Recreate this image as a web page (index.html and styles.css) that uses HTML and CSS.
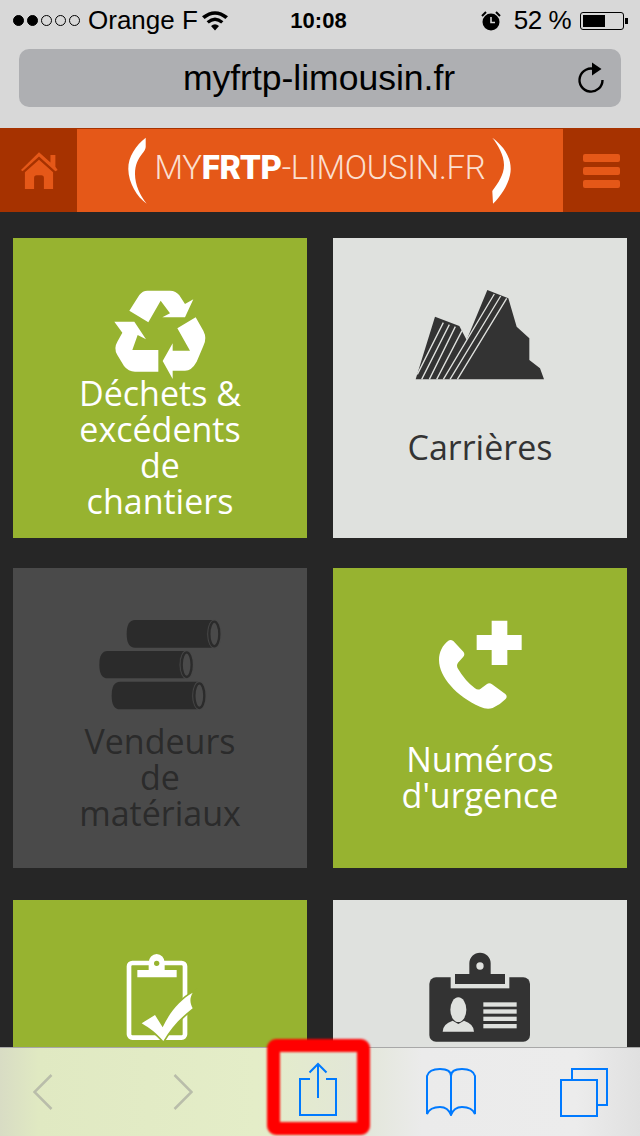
FILE: index.html
```html
<!DOCTYPE html>
<html lang="fr">
<head>
    <meta charset="UTF-8">
    <meta name="viewport" content="width=device-width, initial-scale=1.0">
    <title>myfrtp-limousin.fr</title>
    <link rel="stylesheet" href="styles.css">
</head>
<body>
    <div class="safari-top">
        <div class="status-bar">
            <div class="status-left">
                <span class="dot full"></span><span class="dot full"></span><span class="dot"></span><span class="dot"></span><span class="dot"></span>
                <span class="carrier">Orange F</span>
                <svg class="wifi" viewBox="0 0 28 20" width="28" height="20">
                    <path d="M14 19.5 L10 15 Q14 11.5 18 15 Z M7.8 12.6 L5.6 10.2 Q14 2.8 22.4 10.2 L20.2 12.6 Q14 7.2 7.8 12.6 Z M3.6 8 L1 5.3 Q14 -5 27 5.3 L24.4 8 Q14 -.6 3.6 8 Z" fill="#000"/>
                </svg>
            </div>
            <span class="clock">10:08</span>
            <div class="status-right">
                <svg class="alarm" viewBox="0 0 20 20" width="20" height="20">
                    <circle cx="10" cy="11" r="8.5" fill="#000"/>
                    <path d="M10 6 V11.5 H14" fill="none" stroke="#d8d8d8" stroke-width="1.6"/>
                    <path d="M1 5 L5 1 M19 5 L15 1" stroke="#000" stroke-width="2"/>
                </svg>
                <span class="battery-text">52 %</span>
                <div class="battery"><div class="battery-level"></div></div>
            </div>
        </div>
        <div class="url-bar">
            <span class="url">myfrtp-limousin.fr</span>
            <svg class="reload" viewBox="0 0 28 32" width="28" height="32">
                <path d="M18.5 7.5 A11.5 11.5 0 1 0 25.5 18" fill="none" stroke="#000" stroke-width="2.4"/>
                <path d="M15 .5 L24.5 7 L15 13.5 Z" fill="#000"/>
            </svg>
        </div>
    </div>

    <header class="site-header">
        <a class="side-btn">
            <svg viewBox="57 70 116 114" width="38" height="38">
                <path d="M60 124 L115 70 L150 101 V78 H165 V114 L172 124 L165 128 L115 83 L65 128 Z" fill="#e55818"/>
                <path d="M115 93 L158 131 V182 H130 V148 Q130 140 122 140 H108 Q100 140 100 148 V182 H72 V131 Z" fill="#e55818"/>
            </svg>
        </a>
        <div class="logo">
            <svg class="bracket" viewBox="0 0 20 68" width="20" height="68">
                <path d="M17.7 .7 C8 8 0 20 .3 32 C.5 46 9 60 18.7 66.7 C12 58 7 48 7 37 C7 28 10 22 14 17 Q17.5 13 17.7 10 Z" fill="#fff"/>
            </svg>
            <span class="logo-text">MY<b>FRTP</b>-LIMOUSIN.FR</span>
            <svg class="bracket" viewBox="0 0 20 68" width="20" height="68">
                <path d="M.3 .7 C10 8 18.7 18 18.7 32 C18.7 44 10 58 1 66.7 L.3 54 C6 46 12 38 12 28 C12 18 6 8 .3 .7 Z" fill="#fff"/>
            </svg>
        </div>
        <a class="side-btn">
            <div class="burger"><span></span><span></span><span></span></div>
        </a>
    </header>

    <main class="tiles">
        <a class="tile green">
            <svg class="tile-icon" viewBox="0 0 420 330" width="140" height="110">
                <g fill="#fff">
                    <path d="M118 92 L148 45 Q158 32 172 32 L240 32 Q258 32 268 46 L285 72 L310 58 L285 112 L217 112 L240 100 L212 62 L175 127 Z"/>
                    <path d="M73 125 L133 125 L168 178 L143 165 L127 210 L205 210 L205 275 L135 275 Q115 275 102 258 L82 225 Q70 205 82 185 L97 158 Z"/>
                    <path d="M248 297 L218 243 L248 190 L248 212 L300 212 L262 145 L317 112 L340 152 Q352 175 340 198 L320 245 Q305 272 285 272 L248 272 Z"/>
                </g>
            </svg>
            <span class="tile-label">Déchets &amp; excédents de chantiers</span>
        </a>
        <a class="tile light">
            <svg class="tile-icon" viewBox="0 0 480 330" width="160" height="110">
                <path d="M47 298 L105 110 L178 138 L200 180 L262 30 L325 55 L350 140 L388 175 L388 240 L420 265 L432 298 Z" fill="#333"/>
                <g stroke="#dfe1de" stroke-width="4">
                    <path d="M52 283 L130 128 M65 298 L148 134 M88 298 L166 140 M110 298 L186 152 M130 298 L283 42 M150 298 L302 48 M172 298 L320 55"/>
                </g>
            </svg>
            <span class="tile-label">Carrières</span>
        </a>
        <a class="tile dark">
            <svg class="tile-icon" viewBox="0 0 420 330" width="140" height="110">
                <g fill="#2b2b2b">
                    <path d="M135 30 H370 V113 H135 Q110 113 110 72 Q110 30 135 30 Z"/>
                    <path d="M53 123 H285 V205 H53 Q28 205 28 164 Q28 123 53 123 Z"/>
                    <path d="M90 215 H325 V298 H90 Q65 298 65 257 Q65 215 90 215 Z"/>
                </g>
                <g fill="#4a4a4a" stroke="#4a4a4a">
                    <ellipse cx="373" cy="72" rx="21" ry="43"/>
                    <ellipse cx="290" cy="164" rx="21" ry="43"/>
                    <ellipse cx="328" cy="257" rx="21" ry="43"/>
                </g>
                <g fill="#4a4a4a" stroke="#2b2b2b" stroke-width="7">
                    <ellipse cx="373" cy="72" rx="15" ry="37"/>
                    <ellipse cx="290" cy="164" rx="15" ry="37"/>
                    <ellipse cx="328" cy="257" rx="15" ry="37"/>
                </g>
            </svg>
            <span class="tile-label">Vendeurs de matériaux</span>
        </a>
        <a class="tile green">
            <svg class="tile-icon" viewBox="0 0 360 330" width="120" height="110">
                <path d="M215 32 H262 V75 H305 V120 H262 V165 H215 V120 H170 V75 H215 Z" fill="#fff"/>
                <path d="M85 92 Q92 87 100 93 L130 125 Q136 133 130 140 L114 158 Q108 166 114 176 Q135 212 165 235 Q174 242 182 236 L200 223 Q208 217 216 223 L256 252 Q264 260 256 268 Q240 285 218 294 Q200 300 180 290 C110 260 57 200 57 150 C57 125 68 105 85 92 Z" fill="#fff"/>
            </svg>
            <span class="tile-label">Numéros d'urgence</span>
        </a>
        <a class="tile green low">
            <svg class="tile-icon" viewBox="0 6 360 330" width="120" height="110">
                <rect x="87" y="69" width="168" height="224" rx="10" fill="none" stroke="#fff" stroke-width="14"/>
                <path d="M112 90 H146 Q146 86 146 68 A24 26 0 0 1 194 68 Q194 86 194 90 H230 V112 H112 Z" fill="#fff"/>
                <circle cx="170" cy="70" r="8" fill="#97b330"/>
                <path d="M125 250 L165 225 L188 262 C210 215 240 180 278 158 C268 175 270 190 278 205 C245 230 215 260 190 303 C170 280 150 265 125 250 Z" fill="#fff" stroke="#97b330" stroke-width="10" paint-order="stroke"/>
            </svg>
        </a>
        <a class="tile light low">
            <svg class="tile-icon" viewBox="0 6 420 330" width="140" height="110">
                <rect x="58" y="112" width="302" height="193" rx="20" fill="#333"/>
                <rect x="122" y="100" width="176" height="45" fill="#dfe1de"/>
                <path d="M135 132 V102 H178 V70 A32 32 0 0 1 242 70 V102 H285 V132 Z" fill="#333"/>
                <circle cx="210" cy="78" r="11" fill="#dfe1de"/>
                <g fill="#dfe1de">
                    <ellipse cx="145" cy="209" rx="24" ry="37"/>
                    <path d="M98 275 Q98 252 128 242 L145 252 L162 242 Q192 252 192 275 Z"/>
                    <rect x="220" y="187" width="100" height="13"/>
                    <rect x="220" y="208" width="100" height="13"/>
                    <rect x="220" y="230" width="100" height="13"/>
                    <rect x="220" y="252" width="100" height="13"/>
                </g>
            </svg>
        </a>
    </main>

    <footer class="toolbar">
        <svg viewBox="0 0 20 36" width="20" height="36"><path d="M18.5 1 L1.5 18 L18.5 35" class="off"/></svg>
        <svg viewBox="0 0 20 36" width="20" height="36"><path d="M1.5 1 L18.5 18 L1.5 35" class="off"/></svg>
        <svg class="share" viewBox="0 0 38 54" width="38" height="54">
            <path d="M11 17 H1 V53 H37 V17 H27 M19 36 V2 M10.5 10.5 L19 2 L27.5 10.5" class="on"/>
        </svg>
        <svg viewBox="0 0 50 48" width="50" height="48">
            <path d="M25 8 Q25 1 14 1 Q3 1 1 8 V46 Q4 39 14 39 Q22 39 25 47 Q28 39 36 39 Q46 39 49 46 V8 Q47 1 36 1 Q25 1 25 8 V47" class="on"/>
        </svg>
        <svg viewBox="0 0 48 49" width="48" height="49">
            <path d="M12 11 V1 H47 V37 H38 M1 12 H37 V48 H1 Z" class="on"/>
        </svg>
        <div class="highlight"></div>
    </footer>
</body>
</html>
```

FILE: styles.css
```css
* {
    box-sizing: border-box;
}

body {
    margin: 0;
    width: 640px;
    height: 1136px;
    overflow: hidden;
    display: flex;
    flex-direction: column;
    background-color: #262626;
    font-family: "Liberation Sans", Arial, sans-serif;
    color: #000000;
}

.safari-top {
    height: 128px;
    background-color: #d8d8d8;
}

.status-bar {
    height: 41px;
    padding: 0 16px 0 13px;
    display: grid;
    grid-template-columns: 1fr 94px 1fr;
    align-items: center;
    font-size: 26px;
}

.status-left,
.status-right {
    display: flex;
    align-items: center;
}

.status-right {
    justify-content: flex-end;
}

.dot {
    width: 11px;
    height: 11px;
    margin-right: 3px;
    border: 1px solid #000000;
    border-radius: 50%;
}

.dot.full {
    background-color: #000000;
}

.carrier {
    margin-left: 5px;
}

.wifi {
    margin-left: 3px;
}

.clock {
    font-size: 22px;
    font-weight: bold;
    text-align: center;
}

.battery-text {
    margin: 0 9px 0 13px;
    letter-spacing: -0.5px;
}

.battery {
    width: 44px;
    height: 18px;
    padding: 2px;
    border: 1px solid #000000;
    border-radius: 3px;
    position: relative;
}

.battery::after {
    content: "";
    position: absolute;
    right: -5px;
    top: 5px;
    width: 3px;
    height: 6px;
    background-color: #000000;
}

.battery-level {
    width: 22px;
    height: 100%;
    background-color: #000000;
}

.url-bar {
    height: 58px;
    margin: 8px 19px 0;
    padding: 0 16px 0 0;
    display: flex;
    align-items: center;
    border-radius: 10px;
    background-color: #aeafb2;
    position: relative;
}

.url {
    flex: 1;
    padding-left: 42px;
    text-align: center;
    font-size: 35.5px;
}

.site-header {
    height: 84px;
    display: flex;
    background-color: #e55818;
    border-top: 1px solid #a63200;
}

.side-btn {
    width: 77px;
    display: flex;
    align-items: center;
    justify-content: center;
    background-color: #a63200;
}

.logo {
    flex: 1;
    display: flex;
    align-items: center;
    justify-content: center;
    gap: 6px;
}

.logo-text {
    margin-bottom: 6px;
    font-family: Roboto, sans-serif;
    font-size: 33px;
    font-weight: 300;
    letter-spacing: -0.3px;
    color: #fbdfcf;
}

.logo-text b {
    font-weight: 900;
    color: #ffffff;
}

.burger {
    width: 37px;
    display: flex;
    flex-direction: column;
    gap: 5px;
}

.burger span {
    height: 8px;
    border-radius: 2px;
    background-color: #e55818;
}

.tiles {
    flex: 1;
    min-height: 0;
    padding: 26px 13px 0;
    overflow: hidden;
    display: grid;
    grid-template-columns: 294px 294px;
    grid-auto-rows: 300px;
    column-gap: 26px;
    row-gap: 30px;
}

.tile {
    padding-top: 42px;
    display: flex;
    flex-direction: column;
    align-items: center;
}

.tile.low {
    margin-top: 2px;
}

.green {
    background-color: #97b330;
    color: #ffffff;
}

.light {
    background-color: #dfe1de;
    color: #333333;
}

.dark {
    background-color: #4a4a4a;
    color: #2b2b2b;
}

.tile-icon {
    flex-shrink: 0;
}

.tile-label {
    width: 180px;
    height: 148px;
    margin-top: -17px;
    display: flex;
    align-items: center;
    justify-content: center;
    text-align: center;
    font-family: "Open Sans", sans-serif;
    font-size: 34px;
    line-height: 36px;
}

.toolbar {
    height: 89px;
    flex-shrink: 0;
    display: grid;
    grid-template-columns: 86px 194px 76px 190px 76px;
    align-items: center;
    justify-items: center;
    border-top: 1px solid #a8a8a8;
    background: linear-gradient(90deg, #d8dcc4 0%, #e0e9c2 6%, #e4edc8 40%, #e2e6d8 56%, #ebebeb 66%, #ececec 90%, #e0e0e0 100%);
    position: relative;
}

.toolbar path {
    fill: none;
    stroke-width: 2;
}

.toolbar .off {
    stroke: #b9bdaa;
    stroke-width: 2.5;
}

.toolbar .on {
    stroke: #007aff;
}

.share {
    margin-bottom: 7px;
}

.highlight {
    position: absolute;
    left: 267px;
    top: -9px;
    width: 103px;
    height: 96px;
    border: 13px solid #ff0000;
    border-radius: 9px;
    filter: blur(1px);
}
```
